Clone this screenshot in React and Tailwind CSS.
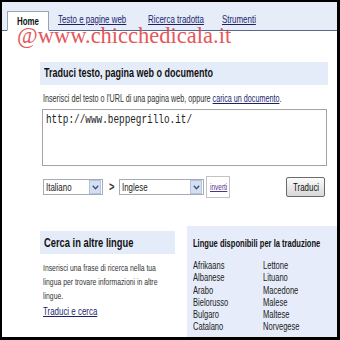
import React from "react";

const sans = { fontFamily: '"Liberation Sans", Arial, sans-serif' };

function T({ className = "", children }) {
  return (
    <span className={"inline-block align-top origin-left whitespace-nowrap scale-x-[0.72] " + className}>{children}</span>
  );
}

function Chevron() {
  return (
    <svg width="7" height="5" viewBox="0 0 7 5">
      <path d="M0.8 0.8 L3.5 3.8 L6.2 0.8" fill="none" stroke="#3a4f7a" strokeWidth="1.3" />
    </svg>
  );
}

function Select({ label, w }) {
  return (
    <div className={`flex items-center h-[16px] border border-[#a5acb5] bg-white ${w}`}>
      <div className="flex-1 min-w-0 pl-[2px] text-[11px] leading-[13px] text-[#222]">
        <T>{label}</T>
      </div>
      <span className="w-[12px] h-[14px] mr-[1px] flex items-center justify-center bg-[#d4dff2] border border-[#b3c2dd]">
        <Chevron />
      </span>
    </div>
  );
}

export default function App() {
  const col1 = ["Afrikaans", "Albanese", "Arabo", "Bielorusso", "Bulgaro", "Catalano"];
  const col2 = ["Lettone", "Lituano", "Macedone", "Malese", "Maltese", "Norvegese"];
  return (
    <div className="w-[340px] h-[340px] bg-black pt-[2px] pl-[2px] pr-[3px] pb-[3px] overflow-hidden" style={sans}>
      <div className="relative w-full h-full bg-white overflow-hidden">
        {/* tab bar */}
        <div className="h-[29px] bg-[#e6ecf8] border-b border-[#59698c] flex items-end pl-[5px]">
          <div className="w-[42px] h-[20px] -mb-px bg-white border border-[#9aa3b3] border-b-white pt-[3px] pl-[9px] text-[11px] leading-[13px]">
            <T className="font-bold text-[#111]">Home</T>
          </div>
          <div className="flex items-start h-[20px] pt-[3px] text-[11px] leading-[13px] text-[#1c1f6e]">
            <div className="ml-[9px] w-[70px]"><T className="underline">Testo e pagine web</T></div>
            <div className="ml-[20px] w-[56px]"><T className="underline">Ricerca tradotta</T></div>
            <div className="ml-[18px] w-[40px]"><T className="underline">Strumenti</T></div>
          </div>
        </div>

        {/* watermark */}
        <div
          className="absolute left-[15px] top-[23px] text-[22.5px] leading-none text-[#e2474a] opacity-90 pointer-events-none whitespace-nowrap"
          style={{ fontFamily: '"Liberation Serif", "Times New Roman", serif' }}
        >
          @www.chicchedicala.it
        </div>

        {/* main */}
        <div className="ml-[38px] mr-[9px] mt-[31px]">
          <div className="h-[23px] bg-[#e5ecf9] flex items-center pl-[4px] text-[12.5px] leading-[15px]">
            <T className="font-bold text-[#111]">Traduci testo, pagina web o documento</T>
          </div>
          <div className="mt-[8px] pl-[3px] h-[12px] text-[10px] leading-[12px] text-[#333]">
            <T>
              Inserisci del testo o l'URL di una pagina web, oppure <span className="text-[#1c1f6e] underline">carica un documento</span>.
            </T>
          </div>
          <div
            className="mt-[4px] ml-[2px] mr-[1px] h-[57px] border border-[#a3a3a3] bg-white px-[3px] pt-[2px] text-[13px] leading-[15px] text-[#222]"
            style={{ fontFamily: '"Liberation Mono", "Courier New", monospace' }}
          >
            <T>http://www.beppegrillo.it/</T>
          </div>
          <div className="mt-[10px] ml-[3px] mr-[3px] flex items-center">
            <Select label="Italiano" w="w-[60px]" />
            <span className="ml-[6px] mr-[5px] w-[5px] text-[13px] leading-[14px] font-bold text-[#333]">
              <T>&gt;</T>
            </span>
            <Select label="Inglese" w="w-[85px]" />
            <div className="ml-[2px] w-[24px] h-[22px] border border-[#c3c3c3] bg-white flex items-center pl-[3px] text-[9px] leading-[11px]">
              <T className="text-[#553388] underline">inverti</T>
            </div>
            <div className="ml-auto w-[39px] h-[20px] rounded-[2px] border border-[#6a6a6a] bg-gradient-to-b from-[#fbfbfb] to-[#d8d8d8] flex items-center pl-[6px] text-[11px] leading-[13px]">
              <T className="text-[#111]">Traduci</T>
            </div>
          </div>

          {/* bottom */}
          <div className="mt-[28px] flex">
            <div className="w-[135px] mt-[5px]">
              <div className="h-[23px] bg-[#e5ecf9] flex items-center pl-[4px] text-[13px] leading-[15px]">
                <T className="font-bold text-[#111]">Cerca in altre lingue</T>
              </div>
              <div className="mt-[7px] pl-[3px] text-[9.5px] leading-[14px] text-[#333]">
                <div><T>Inserisci una frase di ricerca nella tua</T></div>
                <div><T>lingua per trovare informazioni in altre</T></div>
                <div><T>lingue.</T></div>
              </div>
              <div className="pl-[3px] mt-[1px] text-[11px] leading-[14px] text-[#1c1f6e]">
                <T className="underline">Traduci e cerca</T>
              </div>
            </div>
            <div className="ml-[12px] flex-1 bg-[#e6ecf9] h-[120px] -mr-[9px] pl-[6px] pt-[11px]">
              <div className="text-[10.5px] leading-[13px]">
                <T className="font-bold text-[#111]">Lingue disponibili per la traduzione</T>
              </div>
              <div className="mt-[9px] flex text-[10.5px] leading-[12.3px] text-[#222]">
                <div className="w-[70px]">
                  {col1.map((l) => (
                    <div key={l}><T>{l}</T></div>
                  ))}
                </div>
                <div>
                  {col2.map((l) => (
                    <div key={l}><T>{l}</T></div>
                  ))}
                </div>
              </div>
            </div>
          </div>
        </div>
      </div>
    </div>
  );
}
